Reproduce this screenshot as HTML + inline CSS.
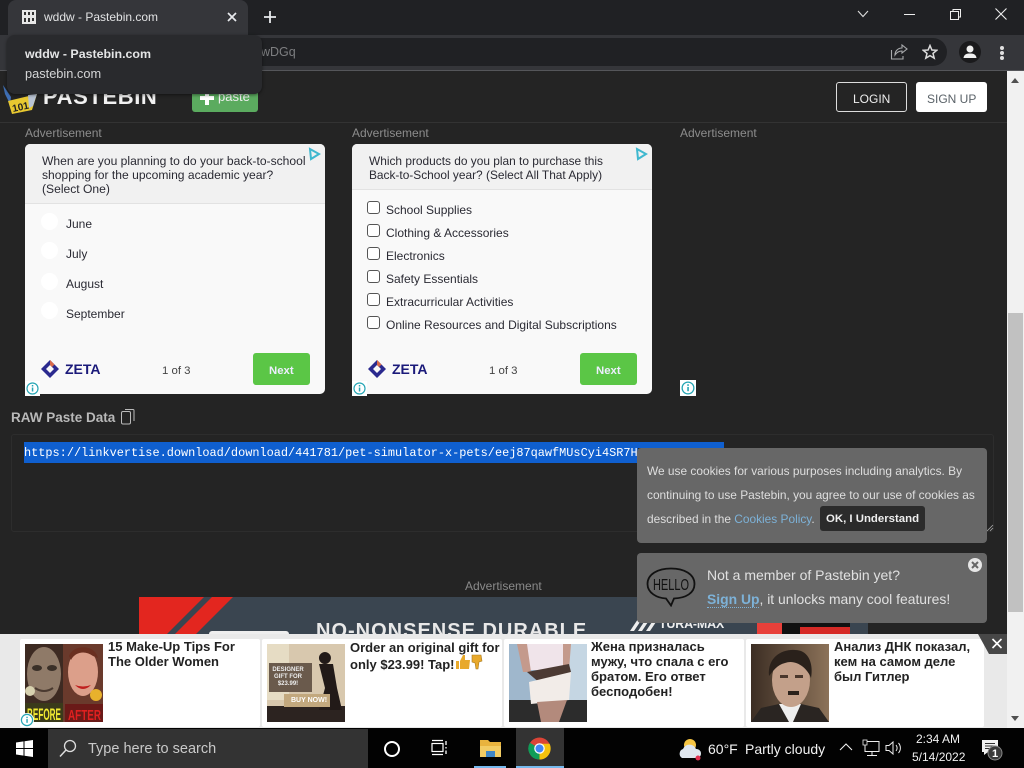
<!DOCTYPE html>
<html><head><meta charset="utf-8"><title>wddw - Pastebin.com</title>
<style>
html,body{margin:0;padding:0;width:1024px;height:768px;overflow:hidden;background:#242424;font-family:"Liberation Sans","DejaVu Sans",sans-serif}
.a{position:absolute}
.t{position:absolute;white-space:nowrap;line-height:1}
.ad{position:absolute;background:#f9f9f9;border-radius:5px;overflow:hidden;color:#2a2a33}
.rad{position:absolute;left:16px;width:17px;height:17px;border-radius:50%;background:#fff}
.cb{position:absolute;left:15px;width:11px;height:11px;border:1px solid #555;border-radius:3px;background:#fff}
.card{position:absolute;top:639px;height:88px;background:#fff;border-radius:2px}
.card div.h{position:absolute;font-weight:bold;font-size:13px;line-height:15px;color:#222;white-space:nowrap}
.i{position:absolute;width:15px;height:15px;background:#fff}
</style></head><body>

<!-- page -->
<div class="a" style="left:0;top:71px;width:1007px;height:563px;background:#242424"></div>
<div class="a" style="left:0;top:122px;width:1007px;height:1px;background:#333"></div>
<!-- scrollbar -->
<div class="a" style="left:1007px;top:71px;width:17px;height:657px;background:#f1f1f1"></div>
<div class="a" style="left:1008px;top:313px;width:15px;height:299px;background:#c1c1c1"></div>
<div class="a" style="left:1011px;top:78px;border-left:4px solid transparent;border-right:4px solid transparent;border-bottom:5px solid #505050"></div>
<div class="a" style="left:1011px;top:716px;border-left:4px solid transparent;border-right:4px solid transparent;border-top:5px solid #505050"></div>

<!-- logo -->
<svg class="a" style="left:2px;top:82px" width="38" height="40" viewBox="0 0 38 40"><path d="M1 3 L9 15 L8 22 L3 12Z" fill="#3f6fb5"/><path d="M6 19 L35 12 L30 28 L10 32Z" fill="#e8c830"/><path d="M26 13 L35 12 L31 24 L27 26Z" fill="#b9c4d4"/><text x="11" y="30" font-family="Liberation Sans" font-size="10" font-weight="bold" fill="#222" transform="rotate(-12 11 30)">101</text></svg>
<div class="t" style="left:43px;top:86px;font-size:22px;font-weight:bold;color:#f2f2f2;letter-spacing:.6px">PASTEBIN</div>
<div class="a" style="left:192px;top:80px;width:66px;height:32px;background:#5bab5f;border-radius:3px"></div>
<div class="a" style="left:200px;top:96px;width:14px;height:4px;background:#fff"></div>
<div class="a" style="left:205px;top:91px;width:4px;height:14px;background:#fff"></div>
<div class="t" style="left:218px;top:90px;font-size:13px;color:#eee">paste</div>
<div class="a" style="left:836px;top:82px;width:69px;height:28px;border:1px solid #ddd;border-radius:3px"></div>
<div class="t" style="left:853px;top:93px;font-size:12px;color:#eee">LOGIN</div>
<div class="a" style="left:916px;top:82px;width:71px;height:30px;background:#fff;border-radius:3px"></div>
<div class="t" style="left:927px;top:93px;font-size:12px;color:#5a6268">SIGN UP</div>

<div class="t" style="left:25px;top:127px;font-size:12px;color:#8d8d8d">Advertisement</div>
<div class="t" style="left:352px;top:127px;font-size:12px;color:#8d8d8d">Advertisement</div>
<div class="t" style="left:680px;top:127px;font-size:12px;color:#8d8d8d">Advertisement</div>

<!-- ad 1 -->
<div class="ad" style="left:25px;top:144px;width:300px;height:250px">
 <div class="a" style="left:0;top:0;width:300px;height:59px;background:#f1f1f1;border-bottom:1px solid #e2e2e2"></div>
 <div class="t" style="left:17px;top:10px;font-size:12.100px;line-height:14px">When are you planning to do your back-to-school<br>shopping for the upcoming academic year?<br>(Select One)</div>
 <div class="rad" style="top:69px"></div><div class="t" style="left:41px;top:74px;font-size:12px">June</div>
 <div class="rad" style="top:98px"></div><div class="t" style="left:41px;top:104px;font-size:12px">July</div>
 <div class="rad" style="top:129px"></div><div class="t" style="left:41px;top:134px;font-size:12px">August</div>
 <div class="rad" style="top:158px"></div><div class="t" style="left:41px;top:164px;font-size:12px">September</div>
 <svg class="a" style="left:15px;top:215px" width="20" height="20" viewBox="0 0 20 20"><path d="M10 1 L19 10 L10 19 L1 10 Z M10 6 L6 10 L10 14 L14 10Z" fill="#2b2a8f" fill-rule="evenodd"/><path d="M10 1 L14.500 5.500 L12 8 L10 6Z" fill="#d96a4a"/></svg>
 <div class="t" style="left:40px;top:218px;font-size:14px;font-weight:bold;color:#1b1a7a">ZETA</div>
 <div class="t" style="left:137px;top:222px;font-size:11.400px;color:#444">1 of 3</div>
 <div class="a" style="left:228px;top:209px;width:57px;height:32px;background:#5bc646;border-radius:3px"></div>
 <div class="t" style="left:244px;top:222px;font-size:11.400px;font-weight:bold;color:#eef">Next</div>
 <svg class="a" style="left:283px;top:3px" width="13" height="14" viewBox="0 0 13 14"><path d="M2 2 L11 7 L3 12Z" fill="none" stroke="#3fb8cf" stroke-width="2"/></svg>
</div>
<!-- ad 2 -->
<div class="ad" style="left:352px;top:144px;width:300px;height:250px">
 <div class="a" style="left:0;top:0;width:300px;height:45px;background:#f1f1f1;border-bottom:1px solid #e2e2e2"></div>
 <div class="t" style="left:17px;top:10px;font-size:11.900px;line-height:14px">Which products do you plan to purchase this<br>Back-to-School year? (Select All That Apply)</div>
 <div class="cb" style="top:57px"></div><div class="t" style="left:34px;top:60px;font-size:12px">School Supplies</div>
 <div class="cb" style="top:80px"></div><div class="t" style="left:34px;top:83px;font-size:12px">Clothing &amp; Accessories</div>
 <div class="cb" style="top:103px"></div><div class="t" style="left:34px;top:106px;font-size:12px">Electronics</div>
 <div class="cb" style="top:126px"></div><div class="t" style="left:34px;top:129px;font-size:12px">Safety Essentials</div>
 <div class="cb" style="top:149px"></div><div class="t" style="left:34px;top:152px;font-size:12px">Extracurricular Activities</div>
 <div class="cb" style="top:172px"></div><div class="t" style="left:34px;top:175px;font-size:12px">Online Resources and Digital Subscriptions</div>
 <svg class="a" style="left:15px;top:215px" width="20" height="20" viewBox="0 0 20 20"><path d="M10 1 L19 10 L10 19 L1 10 Z M10 6 L6 10 L10 14 L14 10Z" fill="#2b2a8f" fill-rule="evenodd"/><path d="M10 1 L14.500 5.500 L12 8 L10 6Z" fill="#d96a4a"/></svg>
 <div class="t" style="left:40px;top:218px;font-size:14px;font-weight:bold;color:#1b1a7a">ZETA</div>
 <div class="t" style="left:137px;top:222px;font-size:11.400px;color:#444">1 of 3</div>
 <div class="a" style="left:228px;top:209px;width:57px;height:32px;background:#5bc646;border-radius:3px"></div>
 <div class="t" style="left:244px;top:222px;font-size:11.400px;font-weight:bold;color:#eef">Next</div>
 <svg class="a" style="left:283px;top:3px" width="13" height="14" viewBox="0 0 13 14"><path d="M2 2 L11 7 L3 12Z" fill="none" stroke="#3fb8cf" stroke-width="2"/></svg>
</div>
<!-- ad info icons -->
<svg class="i" style="left:25px;top:381px" viewBox="0 0 15 15"><circle cx="7.500" cy="7.500" r="5.500" fill="none" stroke="#26a6b5" stroke-width="1.200"/><rect x="6.800" y="6.500" width="1.500" height="4" fill="#26a6b5"/><rect x="6.800" y="4" width="1.500" height="1.500" fill="#26a6b5"/></svg>
<svg class="i" style="left:352px;top:381px" viewBox="0 0 15 15"><circle cx="7.500" cy="7.500" r="5.500" fill="none" stroke="#26a6b5" stroke-width="1.200"/><rect x="6.800" y="6.500" width="1.500" height="4" fill="#26a6b5"/><rect x="6.800" y="4" width="1.500" height="1.500" fill="#26a6b5"/></svg>
<svg class="i" style="left:680px;top:380px;width:16px;height:16px" viewBox="0 0 15 15"><circle cx="7.500" cy="7.500" r="5.500" fill="none" stroke="#26a6b5" stroke-width="1.200"/><rect x="6.800" y="6.500" width="1.500" height="4" fill="#26a6b5"/><rect x="6.800" y="4" width="1.500" height="1.500" fill="#26a6b5"/></svg>

<!-- raw paste -->
<div class="t" style="left:11px;top:411px;font-size:13.500px;font-weight:bold;color:#b9b9b9">RAW Paste Data</div>
<svg class="a" style="left:120px;top:408px" width="16" height="17" viewBox="0 0 16 17"><rect x="1.500" y="3.500" width="9" height="12.500" rx="1.500" fill="none" stroke="#bbb"/><path d="M5 1.500 H13 a1 1 0 0 1 1 1 V13" fill="none" stroke="#bbb"/></svg>
<div class="a" style="left:11px;top:434px;width:983px;height:98px;border:1px solid #2d2d2d;border-radius:3px;box-sizing:border-box"></div>
<svg class="a" style="left:986px;top:524px" width="8" height="8" viewBox="0 0 8 8"><path d="M1 7 L7 1 M4 7 L7 4" stroke="#aaa" stroke-width=".8"/></svg>
<div class="a" style="left:24px;top:442px;width:700px;height:6px;background:#0f5fcf"></div>
<div class="a" style="left:24px;top:448px;width:614px;height:15px;background:#0f5fcf"></div>
<div class="t" style="left:24px;top:446px;font-family:'Liberation Mono',monospace;font-size:11.900px;line-height:14px;color:#fff;width:614px;overflow:hidden">https://linkvertise.download/download/441781/pet-simulator-x-pets/eej87qawfMUsCyi4SR7H</div>

<div class="t" style="left:465px;top:580px;font-size:12px;color:#8a8a8a">Advertisement</div>
<!-- banner -->
<div class="a" style="left:139px;top:597px;width:729px;height:40px;background:#3a4550;overflow:hidden">
 <svg class="a" style="left:0;top:0" width="100" height="40"><path d="M0 0 H65 L25 40 H0Z" fill="#e3261f"/><path d="M73 0 H94 L54 40 H33Z" fill="#e3261f"/></svg>
 <div class="a" style="left:70px;top:34px;width:80px;height:8px;background:#eee;border-radius:3px"></div>
 <div class="t" style="left:177px;top:24px;font-size:20px;font-weight:bold;letter-spacing:1px;color:#e8e8e8">NO-NONSENSE DURABLE</div>
 <svg class="a" style="left:491px;top:22px" width="28" height="12" viewBox="0 0 28 12"><path d="M0 12 L8 0 H12 L4 12Z M8 12 L16 0 H20 L12 12Z M16 12 L24 0 H28 L20 12Z" fill="#eee"/></svg>
 <div class="t" style="left:520px;top:21px;font-size:12.500px;font-weight:bold;letter-spacing:-.2px;color:#eee">TURA-MAX</div>
 <div class="a" style="left:618px;top:24px;width:25px;height:16px;background:#e8403a"></div>
 <div class="a" style="left:643px;top:24px;width:68px;height:16px;background:#111"></div>
 <div class="a" style="left:661px;top:30px;width:50px;height:10px;background:#d62a26"></div>
</div>

<!-- cookie -->
<div class="a" style="left:637px;top:448px;width:350px;height:95px;background:#676767;border-radius:4px"></div>
<div class="t" style="left:647px;top:459px;font-size:11.900px;line-height:24px;color:#dedede;width:335px;white-space:nowrap">We use cookies for various purposes including analytics. By<br>continuing to use Pastebin, you agree to our use of cookies as<br>described in the <span style="color:#7db2d8">Cookies Policy</span>.</div>
<div class="a" style="left:820px;top:506px;width:105px;height:25px;background:#2b2b2b;border-radius:3px"></div>
<div class="t" style="left:826px;top:514px;font-size:11.400px;font-weight:bold;color:#eee">OK, I Understand</div>
<div class="a" style="left:637px;top:553px;width:350px;height:70px;background:#676767;border-radius:4px"></div>
<svg class="a" style="left:646px;top:567px" width="50" height="40" viewBox="0 0 50 40"><path d="M25 1.500 C12 1.500 1.500 7 1.500 17 C1.500 26 11 31 20 31.500 L25 38.500 L28 31.500 C40 31 48.500 26 48.500 17 C48.500 7 38 1.500 25 1.500Z" fill="none" stroke="#111" stroke-width="1.800"/><text x="7" y="23" textLength="36" lengthAdjust="spacingAndGlyphs" font-family="Liberation Sans" font-size="16" fill="#111">HELLO</text></svg>
<div class="t" style="left:707px;top:568px;font-size:14px;color:#e0e0e0">Not a member of Pastebin yet?</div>
<div class="t" style="left:707px;top:593px;font-size:13.900px;color:#e0e0e0"><span style="color:#7db2d8;font-weight:bold;border-bottom:1px dotted #7db2d8">Sign Up</span>, it unlocks many cool features!</div>
<svg class="a" style="left:967px;top:557px" width="16" height="16" viewBox="0 0 16 16"><circle cx="8" cy="8" r="7" fill="#e6e6e6"/><path d="M5 5 L11 11 M11 5 L5 11" stroke="#666" stroke-width="2"/></svg>

<!-- bottom ad bar -->
<div class="a" style="left:0;top:634px;width:1007px;height:94px;background:#e9e9e9"></div>
<div class="card" style="left:20px;width:240px">
 <svg class="a" style="left:5px;top:5px" width="78" height="78" viewBox="0 0 78 78"><rect width="78" height="78" fill="#3d2a22"/><ellipse cx="19" cy="30" rx="17" ry="27" fill="#8f7a68"/><ellipse cx="12" cy="24" rx="5" ry="3" fill="#3a3028"/><ellipse cx="27" cy="24" rx="5" ry="3" fill="#3a3028"/><path d="M10 44 Q19 50 28 44" stroke="#4a3a30" stroke-width="2" fill="none"/><rect x="38" y="0" width="40" height="78" fill="#6a3a2c"/><ellipse cx="58" cy="28" rx="15" ry="24" fill="#dc9f8a"/><path d="M44 12 C48 0 70 0 73 14 L68 12 C60 6 50 8 46 16Z" fill="#6a2f20"/><path d="M50 41 Q58 49 66 41 Q58 44 50 41Z" fill="#c0201f"/><circle cx="71" cy="51" r="6" fill="#e8b12c"/><circle cx="5" cy="47" r="5" fill="#d8d2b0"/><rect x="0" y="59" width="38" height="19" fill="#3a3a1a"/><rect x="40" y="60" width="38" height="18" fill="#6a1a18"/><text x="2" y="76" textLength="34" lengthAdjust="spacingAndGlyphs" font-family="Liberation Sans" font-size="17" font-weight="bold" fill="#f1ea32">BEFORE</text><text x="43" y="76" textLength="33" lengthAdjust="spacingAndGlyphs" font-family="Liberation Sans" font-size="15" font-weight="bold" fill="#e02020">AFTER</text></svg>
 <div class="h" style="left:88px;top:0px">15 Make-Up Tips For<br>The Older Women</div>
</div>
<svg class="a" style="left:20px;top:713px;background:#fff;border-radius:7px" width="14" height="14" viewBox="0 0 15 15"><circle cx="7.500" cy="7.500" r="6" fill="none" stroke="#26a6b5" stroke-width="1.300"/><rect x="6.800" y="6.500" width="1.500" height="4" fill="#26a6b5"/><rect x="6.800" y="4" width="1.500" height="1.500" fill="#26a6b5"/></svg>
<div class="card" style="left:262px;width:240px">
 <svg class="a" style="left:5px;top:5px" width="78" height="78" viewBox="0 0 78 78"><rect width="78" height="78" fill="#d8c8ae"/><rect x="0" width="22" height="56" fill="#e6dcc4"/><rect y="62" width="78" height="16" fill="#2c2320"/><rect x="2" y="19" width="43" height="29" fill="#6a5a4c"/><path d="M58 8 a6 6 0 1 1 -.1 0 M52 20 L66 20 L70 44 L75 66 L52 66 L58 44Z" fill="#221a18"/><rect x="17" y="50" width="46" height="13" fill="#c2a87e"/></svg>
 <div class="t" style="left:8px;top:28px;width:36px;font-size:6px;line-height:7px;text-align:center;font-weight:bold;color:#eee">DESIGNER<br>GIFT FOR<br>$23.99!</div>
 <div class="t" style="left:29px;top:58px;font-size:7px;font-weight:bold;color:#fff">BUY NOW!</div>
 <div class="h" style="left:88px;top:0px;line-height:17px">Order an original gift for<br>only $23.99! Tap!</div>
 <svg class="a" style="left:193px;top:15px" width="30" height="16" viewBox="0 0 30 16"><path d="M1 7 H4 V15 H1Z M5 7 L8 1 H10 L10 6 H15 L14 15 H5Z" fill="#e8a92c"/><path d="M17 1 H26 L27 7 L24 8 L23 15 H21 L20 9 L17 8Z" fill="#e8a92c" stroke="#a87a20" stroke-width=".6"/></svg>
</div>
<div class="card" style="left:504px;width:240px">
 <svg class="a" style="left:5px;top:5px" width="78" height="78" viewBox="0 0 78 78"><rect width="78" height="78" fill="#9fb7cc"/><rect x="55" width="23" height="58" fill="#c5d6e3"/><rect y="56" width="78" height="22" fill="#2c2c2c"/><path d="M16 0 H54 L54 26 H20Z" fill="#f0e4ea"/><path d="M8 0 H18 L22 28 L14 28Z M54 0 H62 L60 26 L54 26Z" fill="#c49a8c"/><path d="M18 28 L60 20 L62 28 L32 40Z" fill="#4c3a33"/><path d="M20 38 L62 28 L60 56 L22 60Z" fill="#f2ece8"/><path d="M28 58 L58 56 L50 78 L32 78Z" fill="#b38a7c"/></svg>
 <div class="h" style="left:87px;top:0px">Жена призналась<br>мужу, что спала с его<br>братом. Его ответ<br>бесподобен!</div>
</div>
<div class="card" style="left:746px;width:238px">
 <svg class="a" style="left:5px;top:5px" width="78" height="78" viewBox="0 0 78 78"><defs><linearGradient id="bg" x1="0" x2="1" y1="0" y2="0"><stop offset="0" stop-color="#3c2e24"/><stop offset="1" stop-color="#8c7259"/></linearGradient></defs><rect width="78" height="78" fill="url(#bg)"/><path d="M0 78 L10 64 L28 60 L50 60 L68 64 L78 78Z" fill="#2a2522"/><path d="M28 60 H50 L42 78 H38Z" fill="#eee"/><ellipse cx="40" cy="36" rx="19" ry="27" fill="#c3a08a"/><path d="M18 32 C16 10 36 3 50 7 C60 11 62 24 60 34 C56 23 44 15 34 19 C26 21 22 27 18 32Z" fill="#2a211b"/><rect x="37" y="47" width="11" height="4" fill="#2a211b"/><rect x="29" y="31" width="8" height="3" fill="#4a372c"/><rect x="44" y="31" width="8" height="3" fill="#4a372c"/></svg>
 <div class="h" style="left:88px;top:0px">Анализ ДНК показал,<br>кем на самом деле<br>был Гитлер</div>
</div>
<svg class="a" style="left:978px;top:634px" width="29" height="20" viewBox="0 0 29 20"><path d="M0 0 H29 V20 H11Z" fill="#474747"/><path d="M14.500 5 L23.500 14 M23.500 5 L14.500 14" stroke="#fff" stroke-width="1.600"/></svg>

<!-- chrome -->
<div class="a" style="left:0;top:0;width:1024px;height:35px;background:#202124"></div>
<div class="a" style="left:0;top:35px;width:1024px;height:35px;background:#35363a"></div>
<div class="a" style="left:0;top:70px;width:1024px;height:1px;background:#55565a"></div>
<div class="a" style="left:8px;top:0;width:240px;height:35px;background:#35363a;border-radius:8px 8px 0 0"></div>
<div class="a" style="left:200px;top:38px;width:747px;height:28px;background:#202124;border-radius:14px"></div>
<svg class="a" style="left:21px;top:9px" width="16" height="16" viewBox="0 0 16 16"><rect x="1" y="1" width="14" height="14" fill="#e8e8e8"/><path d="M3 3 h2 v3 h-2z M7 3 h2 v3 h-2z M11 3 h2 v3 h-2z M3 9 h2 v4 h-2z M7 9 h2 v4 h-2z M11 9 h2 v3 h-2z" fill="#333"/></svg>
<div class="t" style="left:44px;top:11px;font-size:12px;color:#e2e3e4">wddw - Pastebin.com</div>
<svg class="a" style="left:226px;top:11px" width="12" height="12" viewBox="0 0 12 12"><path d="M2 2 L10 10 M10 2 L2 10" stroke="#e8eaed" stroke-width="1.700"/></svg>
<svg class="a" style="left:263px;top:10px" width="14" height="14" viewBox="0 0 14 14"><path d="M7 1 V13 M1 7 H13" stroke="#e8eaed" stroke-width="1.800"/></svg>
<div class="t" style="left:261px;top:46px;font-size:12.500px;color:#7d7e80">wDGq</div>
<!-- tab tooltip -->
<div class="a" style="left:7px;top:35px;width:255px;height:59px;background:#292a2d;border-radius:8px;box-shadow:0 1px 3px rgba(0,0,0,.5)"></div>
<div class="t" style="left:25px;top:48px;font-size:12.400px;font-weight:bold;color:#e4e5e6">wddw - Pastebin.com</div>
<div class="t" style="left:25px;top:68px;font-size:12.800px;color:#d4d5d6">pastebin.com</div>
<!-- window controls -->
<svg class="a" style="left:856px;top:9px" width="14" height="10" viewBox="0 0 14 10"><path d="M2 2 L7 7.500 L12 2" fill="none" stroke="#dcdcdc" stroke-width="1.100"/></svg>
<div class="a" style="left:904px;top:14px;width:11px;height:1px;background:#eee"></div>
<svg class="a" style="left:949px;top:8px" width="13" height="13" viewBox="0 0 13 13"><rect x="1.500" y="3.500" width="8" height="8" fill="none" stroke="#eee"/><path d="M4 3.500 V1.500 H11.500 V9 H9.500" fill="none" stroke="#eee"/></svg>
<svg class="a" style="left:994px;top:7px" width="14" height="14" viewBox="0 0 14 14"><path d="M1.500 1.500 L12.500 12.500 M12.500 1.500 L1.500 12.500" stroke="#eee" stroke-width="1.100"/></svg>
<!-- toolbar icons -->
<svg class="a" style="left:890px;top:44px" width="18" height="16" viewBox="0 0 18 16"><path d="M1.500 6 V15 H13 V12 M5 11 C5 7 8 4 12 4 V1 L17 5 L12 9 V7 C9 7 7 8 5 11Z" fill="none" stroke="#a9abad" stroke-width="1.100"/></svg>
<svg class="a" style="left:922px;top:44px" width="16" height="16" viewBox="0 0 16 16"><path d="M8 1.500 L9.900 6 L14.700 6.300 L11 9.400 L12.200 14.200 L8 11.600 L3.800 14.200 L5 9.400 L1.300 6.300 L6.100 6Z" fill="none" stroke="#dcdcdc" stroke-width="1.500"/></svg>
<svg class="a" style="left:959px;top:41px" width="22" height="22" viewBox="0 0 22 22"><circle cx="11" cy="11" r="11" fill="#1a1a1c"/><circle cx="11" cy="8" r="3.500" fill="#f0f0f0"/><path d="M4.500 17 C5 13 8 12.500 11 12.500 C14 12.500 17 13 17.500 17Z" fill="#f0f0f0"/></svg>
<div class="a" style="left:1000px;top:46px;width:4px;height:4px;background:#e0e0e0;border-radius:50%"></div>
<div class="a" style="left:1000px;top:51px;width:4px;height:4px;background:#e0e0e0;border-radius:50%"></div>
<div class="a" style="left:1000px;top:56px;width:4px;height:4px;background:#e0e0e0;border-radius:50%"></div>

<!-- taskbar -->
<div class="a" style="left:0;top:728px;width:1024px;height:40px;background:#020202"></div>
<svg class="a" style="left:16px;top:740px" width="17" height="17" viewBox="0 0 17 17"><path d="M0 2.500 L7.500 1.400 V8 H0Z M8.500 1.200 L17 0 V8 H8.500Z M0 9 H7.500 V15.600 L0 14.500Z M8.500 9 H17 V17 L8.500 15.800Z" fill="#fff"/></svg>
<div class="a" style="left:48px;top:729px;width:320px;height:39px;background:#333"></div>
<svg class="a" style="left:59px;top:739px" width="18" height="19" viewBox="0 0 18 19"><circle cx="11" cy="7" r="5.500" fill="none" stroke="#ddd" stroke-width="1.300"/><path d="M7 11 L1 17.500" stroke="#ddd" stroke-width="1.500"/></svg>
<div class="t" style="left:88px;top:742px;font-size:14.500px;color:#c9c9c9">Type here to search</div>
<div class="a" style="left:384px;top:741px;width:12px;height:12px;border:2px solid #fff;border-radius:50%"></div>
<svg class="a" style="left:431px;top:739px" width="17" height="17" viewBox="0 0 17 17"><rect x="1" y="4.500" width="11" height="8" fill="none" stroke="#fff" stroke-width="1.200"/><path d="M1 1.500 H12 M1 15.500 H12 M15 2 V6 M15 8 V9.500 M15 11.500 V15" stroke="#fff" stroke-width="1.300"/></svg>
<svg class="a" style="left:480px;top:739px" width="21" height="20" viewBox="0 0 21 20"><path d="M0 1 H8 L10 3 H21 V18 H0Z" fill="#e8b33e"/><rect x="0" y="7" width="21" height="11" fill="#f2cc64"/><rect x="6" y="12" width="9" height="6" fill="#3f86c6"/></svg>
<div class="a" style="left:474px;top:766px;width:32px;height:2px;background:#76b9ed"></div>
<div class="a" style="left:516px;top:728px;width:48px;height:40px;background:#333"></div>
<div class="a" style="left:516px;top:766px;width:48px;height:2px;background:#76b9ed"></div>
<svg class="a" style="left:528px;top:737px" width="23" height="23" viewBox="0 0 24 24"><circle cx="12" cy="12" r="11.500" fill="#db4437"/><path d="M12 12 L2 6 A11.500 11.500 0 0 0 12 23.500Z" fill="#0f9d58"/><path d="M12 12 L12 23.500 A11.500 11.500 0 0 0 22.500 7 L12 7Z" fill="#f4c20d"/><circle cx="12" cy="12" r="5.500" fill="#fff"/><circle cx="12" cy="12" r="4.200" fill="#4285f4"/></svg>
<svg class="a" style="left:677px;top:736px" width="26" height="26" viewBox="0 0 26 26"><circle cx="13" cy="9" r="6" fill="#f6c543"/><path d="M5 22 a5 5 0 0 1 1 -9 a7 7 0 0 1 13 0 a4.500 4.500 0 0 1 1 9Z" fill="#dfe6ee"/><circle cx="21" cy="22" r="2.500" fill="#e03050"/></svg>
<div class="t" style="left:708px;top:742px;font-size:14px;color:#f2f2f2">60°F</div>
<div class="t" style="left:745px;top:742px;font-size:14px;color:#f2f2f2">Partly cloudy</div>
<svg class="a" style="left:839px;top:742px" width="14" height="10" viewBox="0 0 14 10"><path d="M1 8 L7 2 L13 8" fill="none" stroke="#eee" stroke-width="1.100"/></svg>
<svg class="a" style="left:862px;top:739px" width="18" height="18" viewBox="0 0 18 18"><rect x="3" y="2.500" width="14" height="10" fill="none" stroke="#eee"/><rect x="1" y="1" width="4" height="5" fill="#020202" stroke="#eee" stroke-width=".8"/><path d="M10 12.500 V16 M5 16.500 H15" stroke="#eee"/></svg>
<svg class="a" style="left:885px;top:740px" width="18" height="16" viewBox="0 0 18 16"><path d="M1 5.500 H4 L8 2 V14 L4 10.500 H1Z" fill="none" stroke="#eee"/><path d="M11 5 C12.500 7 12.500 9 11 11 M13.500 3 C16 6 16 10 13.500 13" fill="none" stroke="#eee"/></svg>
<div class="t" style="left:916px;top:733px;font-size:12px;color:#f2f2f2">2:34 AM</div>
<div class="t" style="left:912px;top:751px;font-size:12px;color:#f2f2f2">5/14/2022</div>
<svg class="a" style="left:981px;top:739px" width="26" height="26" viewBox="0 0 26 26"><path d="M1 1 H17 V13 H7 L3 16 V13 H1Z" fill="#f2f2f2"/><path d="M4 4.500 H14 M4 7 H14 M4 9.500 H11" stroke="#333"/><circle cx="14" cy="14" r="7" fill="#3a3a3a" stroke="#888"/><text x="14" y="18" text-anchor="middle" font-family="Liberation Sans" font-size="11" font-weight="bold" fill="#fff">1</text></svg>
</body></html>
